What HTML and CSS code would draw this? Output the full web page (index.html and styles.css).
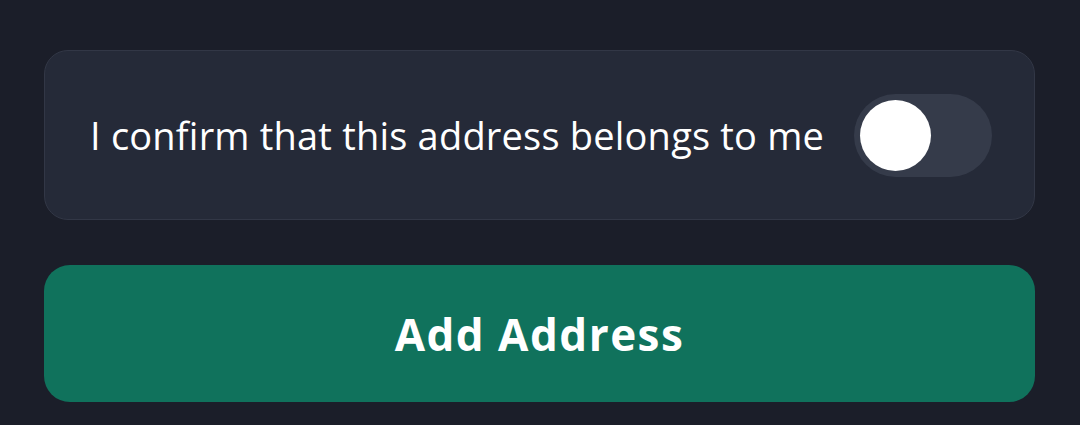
FILE: index.html
```html
<!DOCTYPE html>
<html lang="en">
<head>
  <meta charset="UTF-8" />
  <title>Add Address</title>
  <link rel="stylesheet" href="styles.css">
</head>
<body>

<div class="form-wrap">
  <div class="confirm-card">
    <span class="confirm-text">I confirm that this address belongs to me</span>
    <div class="toggle">
      <div class="toggle-knob"></div>
    </div>
  </div>

  <button class="add-btn">Add Address</button>
</div>

</body>
</html>
```

FILE: styles.css
```css
* {
  margin: 0;
  padding: 0;
  box-sizing: border-box;
}

body {
  font-family: 'Open Sans', 'Noto Sans', sans-serif;
  background-color: #1b1e29;
  color: white;
}

.form-wrap {
  display: flex;
  flex-direction: column;
  gap: 45px;
  padding: 50px 45px 0 44px;
}

.confirm-card {
  height: 170px;
  background-color: #252a38;
  border: 1px solid #323746;
  border-radius: 24px;
  display: flex;
  align-items: center;
  padding: 0 42px 0 45px;
}

.confirm-text {
  flex: 1;
  font-size: 38px;
  font-weight: 400;
  letter-spacing: 0.2px;
}

.toggle {
  width: 138px;
  height: 83px;
  border-radius: 42px;
  background-color: #353b4a;
  padding: 6px;
  display: flex;
  align-items: center;
}

.toggle-knob {
  width: 71px;
  height: 71px;
  border-radius: 50%;
  background-color: white;
}

.add-btn {
  height: 137px;
  border: none;
  border-radius: 26px;
  background-color: #10725c;
  color: white;
  font-family: 'Open Sans', 'Noto Sans', sans-serif;
  font-size: 44px;
  font-weight: bold;
  letter-spacing: 1.5px;
}
```
